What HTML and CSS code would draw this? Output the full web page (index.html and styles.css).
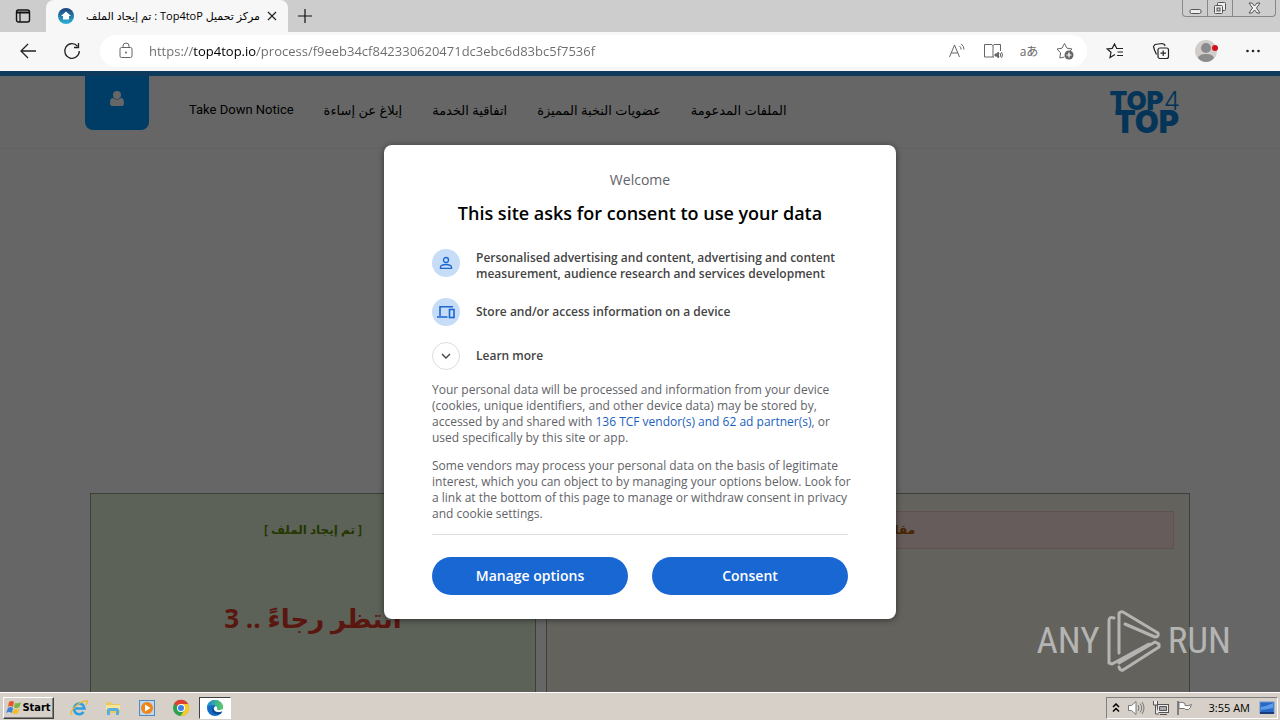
FILE: index.html
```html
<!DOCTYPE html>
<html lang="en">
<head>
    <meta charset="UTF-8">
    <meta name="viewport" content="width=device-width, initial-scale=1.0">
    <title>Top4toP</title>
    <link rel="stylesheet" href="styles.css">
</head>
<body>
    <div class="tabbar">
        <button class="tab-menu" aria-label="Tab actions">
            <svg width="16" height="16" viewBox="0 0 16 16"><rect x="1.5" y="2" width="13" height="12" rx="2" fill="none" stroke="#111" stroke-width="1.4"/><path d="M1.5 3.5h13v2h-13z" fill="#111"/><path d="M5 5v9" stroke="#111" stroke-width="1.2"/></svg>
        </button>
        <div class="tab">
            <svg width="16" height="16" viewBox="0 0 16 16">
                <defs><linearGradient id="fav" x1="0" y1="0" x2="0" y2="1"><stop offset="0" stop-color="#1d3f78"/><stop offset="1" stop-color="#2bb5d8"/></linearGradient></defs>
                <circle cx="8" cy="8" r="8" fill="url(#fav)"/><path d="M8 3.5l5 4.5h-2v3.5H5V8H3z" fill="#fff"/>
            </svg>
            <span class="tab-title" dir="rtl">مركز تحميل Top4toP : تم إيجاد الملف</span>
            <button class="tab-close" aria-label="Close tab">
                <svg width="10" height="10" viewBox="0 0 10 10"><path d="M1 1l8 8M9 1L1 9" stroke="#222" stroke-width="1.2"/></svg>
            </button>
        </div>
        <button class="new-tab" aria-label="New tab">
            <svg width="16" height="16" viewBox="0 0 16 16"><path d="M8 1v14M1 8h14" stroke="#111" stroke-width="1.2"/></svg>
        </button>
        <div class="window-buttons">
            <button aria-label="Minimize"><svg width="13" height="14" viewBox="0 0 13 14"><rect x="1" y="8.5" width="11" height="4" rx="1.5" fill="#eee" stroke="#555"/></svg></button>
            <button aria-label="Restore"><svg width="14" height="14" viewBox="0 0 14 14"><rect x="4.5" y="1.5" width="8" height="8" rx="1" fill="#eee" stroke="#555"/><rect x="1.5" y="4.5" width="8" height="8" rx="1" fill="#eee" stroke="#555"/><rect x="4" y="7" width="3" height="3" fill="#ccc" stroke="#555"/></svg></button>
            <button class="close" aria-label="Close"><svg width="13" height="12" viewBox="0 0 13 12"><path d="M1 1h3l2.5 3L9 1h3L8.5 6 12 11H9L6.5 8 4 11H1l3.5-5z" fill="#eee" stroke="#555"/></svg></button>
        </div>
    </div>

    <div class="toolbar">
        <button class="nav-btn" aria-label="Back"><svg width="18" height="16" viewBox="0 0 18 16"><path d="M9 1L2 8l7 7M2 8h15" fill="none" stroke="#222" stroke-width="1.3"/></svg></button>
        <button class="nav-btn" aria-label="Refresh"><svg width="18" height="18" viewBox="0 0 18 18"><path d="M14.5 4.2A7.3 7.3 0 1 0 16.3 9" fill="none" stroke="#222" stroke-width="1.3"/><path d="M15.5 1v4.5H11" fill="none" stroke="#222" stroke-width="1.3"/></svg></button>
        <div class="address">
            <svg class="lock" width="14" height="18" viewBox="0 0 14 18"><rect x="1" y="5.5" width="12" height="10" rx="1.5" fill="none" stroke="#666"/><path d="M4 5.5V4a3 3 0 0 1 6 0v1.5" fill="none" stroke="#666"/><circle cx="7" cy="10.5" r="1" fill="#666"/></svg>
            <input class="url" type="text" aria-label="Address" value="https://top4top.io/process/f9eeb34cf842330620471dc3ebc6d83bc5f7536f">
            <div class="address-icons">
                <button aria-label="Read aloud"><svg width="18" height="18" viewBox="0 0 18 18" fill="none" stroke="#666"><path d="M1.5 15L6.5 3l5 12M3.2 11h6.6M11.5 4a4 4 0 0 1 1.5 3.5M13.3 2a7 7 0 0 1 2.7 5.5"/></svg></button>
                <button aria-label="Immersive reader"><svg width="20" height="18" viewBox="0 0 20 18" fill="none" stroke="#666"><path d="M10 3v12M10 15H1.5V2.5H9l1 1 1-1h6.5V9M10 15h1"/><path d="M12 12h1.5l2-2v6l-2-2H12z" fill="#666"/><path d="M17 11q1.5 2 0 4M18.5 10q2 3 0 6"/></svg></button>
                <button class="translate" lang="ja" aria-label="Translate">aあ</button>
                <button aria-label="Add to favorites"><svg width="18" height="18" viewBox="0 0 18 18"><path d="M8.5 15L3.8 16l.8-5.2L1 7l5-.8L8.5 1.5 11 6.2l5 .8-2 2" fill="none" stroke="#666"/><circle cx="13" cy="13" r="4.5" fill="#666"/><path d="M13 10.5v5M10.5 13h5" stroke="#fff" stroke-width="1.2"/></svg></button>
            </div>
        </div>
        <div class="browser-actions">
            <button aria-label="Favorites"><svg width="18" height="16" viewBox="0 0 18 16" fill="none" stroke="#222" stroke-width="1.2"><path d="M9 11.5L4 14.5l1-5.2L1.2 6l5-.6L8.5 1l2.2 4.5H17M11.5 9H17M11 12.5h6"/></svg></button>
            <button aria-label="Collections"><svg width="18" height="18" viewBox="0 0 18 18" fill="none" stroke="#222" stroke-width="1.2"><rect x="6" y="6" width="10.5" height="10.5" rx="2"/><path d="M11.2 8.5v5.5M8.5 11.2H14M4.5 12.5L2.5 8 1.5 4.5l1.5-2L10 1.5l2.5 1L13 4"/></svg></button>
            <button aria-label="Profile"><svg width="24" height="22" viewBox="0 0 24 22"><circle cx="11" cy="11" r="11" fill="#d0cdca"/><circle cx="11" cy="8" r="5" fill="#8b8b8b"/><path d="M3 18q1-4 8-4t8 4q-3.5 4-8 4t-8-4" fill="#8b8b8b"/><circle cx="20" cy="8" r="3" fill="#d5101b"/></svg></button>
            <button aria-label="Settings and more"><svg width="16" height="4" viewBox="0 0 16 4" fill="#222"><circle cx="2.5" cy="2" r="1.3"/><circle cx="8" cy="2" r="1.3"/><circle cx="13.5" cy="2" r="1.3"/></svg></button>
        </div>
    </div>

    <main class="viewport">
        <header class="site-header">
            <div class="site-bar">
                <a class="user" href="#" aria-label="Account">
                    <svg width="14" height="15" viewBox="0 0 14 15" fill="#fff"><circle cx="7" cy="4" r="4"/><path d="M0 12q0-5 3-5 4 3 8 0 3 0 3 5 0 3-2 3H2q-2 0-2-3"/></svg>
                </a>
                <nav class="site-nav">
                    <a class="latin" href="#">Take Down Notice</a>
                    <a href="#" dir="rtl">إبلاغ عن إساءة</a>
                    <a href="#" dir="rtl">اتفاقية الخدمة</a>
                    <a href="#" dir="rtl">عضويات النخبة المميزة</a>
                    <a href="#" dir="rtl">الملفات المدعومة</a>
                </nav>
                <a class="logo" href="#"><span>TOP<span class="four">4</span></span><span class="second">TOP</span></a>
            </div>
        </header>

        <div class="panels" lang="ar">
            <section class="panel found">
                <p class="status" dir="rtl">[ تم إيجاد الملف ]</p>
                <p class="wait" dir="rtl">انتظر رجاءً .. 3</p>
            </section>
            <section class="panel articles">
                <h2 dir="rtl">مقالات قد تهمك</h2>
            </section>
        </div>

        <div class="overlay">
            <div class="consent" role="dialog" aria-labelledby="consent-title">
                <p class="welcome">Welcome</p>
                <h1 id="consent-title">This site asks for consent to use your data</h1>
                <ul class="purposes">
                    <li>
                        <span class="circle"><svg width="14" height="14" viewBox="0 0 14 14" fill="none" stroke="#1967d2" stroke-width="1.3"><circle cx="7" cy="4" r="2.5"/><path d="M1.5 12.3v-1.5q1-2.3 5.5-2.3t5.5 2.3v1.5z"/></svg></span>
                        <span class="purpose">Personalised advertising and content, advertising and content measurement, audience research and services development</span>
                    </li>
                    <li>
                        <span class="circle"><svg width="18" height="14" viewBox="0 0 18 14" fill="none" stroke="#1967d2" stroke-width="1.6"><path d="M16 1.8H3V11M0 12h10.5"/><rect x="12.5" y="4.5" width="4.5" height="8"/></svg></span>
                        <span class="purpose">Store and/or access information on a device</span>
                    </li>
                    <li>
                        <button class="circle expand" id="learn" aria-labelledby="learn-label"><svg width="10" height="8" viewBox="0 0 10 8"><path d="M1 2l4 4 4-4" fill="none" stroke="#444" stroke-width="1.4"/></svg></button>
                        <label class="purpose" id="learn-label" for="learn">Learn more</label>
                    </li>
                </ul>
                <p class="details">Your personal data will be processed and information from your device (cookies, unique identifiers, and other device data) may be stored by, accessed by and shared with <a href="#">136 TCF vendor(s) and 62 ad partner(s)</a>, or used specifically by this site or app.</p>
                <p class="details">Some vendors may process your personal data on the basis of legitimate interest, which you can object to by managing your options below. Look for a link at the bottom of this page to manage or withdraw consent in privacy and cookie settings.</p>
                <div class="choices">
                    <button>Manage options</button>
                    <button>Consent</button>
                </div>
            </div>
        </div>

        <div class="watermark">
            <span>ANY</span>
            <svg width="54" height="62" viewBox="0 0 54 62" fill="none" stroke="#b4b4b2" stroke-width="3" stroke-linejoin="round" stroke-linecap="round"><path d="M12 43V3q2-2 4-1l35 21q1 4-3 4L18 14M7 8Q2 6 2 11v42l3 1 37-20M12 57q1 4 4 3l36-23v-3l-4-2L12 53"/></svg>
            <span>RUN</span>
        </div>
    </main>

    <footer class="taskbar">
        <button class="start">
            <svg width="16" height="16" viewBox="0 0 16 16"><path d="M3 2q3-2 5 0L7 7Q4 5 2 7z" fill="#e8572a"/><path d="M9 3q3 1 6-1l-1.5 5Q11 9 8 7.5z" fill="#76b843"/><path d="M2 8q3-2 5 0l-1 5q-3-2-6 0z" fill="#3b83d6"/><path d="M8 9q3 1 5.5-.5L12 13q-3 2-5.5 0z" fill="#f6bd25"/></svg>
            Start
        </button>
        <div class="quick">
            <button aria-label="Internet Explorer"><svg width="18" height="18" viewBox="0 0 18 18" fill="none"><path d="M4.5 9.5h10A5.3 5.3 0 1 0 13.5 13" stroke="#2f9fe0" stroke-width="2.6"/><path d="M2 16Q-1 13 6 7t11-5q1 1-1 4" stroke="#edb92e" stroke-width="1.3"/></svg></button>
            <button aria-label="Explorer"><svg width="18" height="18" viewBox="0 0 18 18"><path d="M2 3h5l1 2h8v9H2z" fill="#ecc95d"/><path d="M2 6h14v5H2z" fill="#f9e59a"/><path d="M3 16v-5q0-2 2-2h8q2 0 2 2v5h-3v-4H6v4z" fill="#59b0de"/></svg></button>
            <button aria-label="Media Player"><svg width="18" height="18" viewBox="0 0 18 18"><rect x="1.5" y="1.5" width="15" height="15" fill="#b8d9f2" stroke="#5788ba"/><circle cx="9" cy="9" r="6" fill="#f18518"/><path d="M7 5.5l5.5 3.5L7 12.5z" fill="#fff"/></svg></button>
            <button aria-label="Chrome"><svg width="18" height="18" viewBox="0 0 18 18"><circle cx="9" cy="9" r="8" fill="#2ca24f"/><path d="M9 9L2 5a8 8 0 0 1 14 0z" fill="#dd4032"/><path d="M9 5h7.2A8 8 0 0 1 8.5 17l4-6z" fill="#f9c927"/><circle cx="9" cy="9" r="4" fill="#fff"/><circle cx="9" cy="9" r="3" fill="#3f7fe8"/></svg></button>
            <button class="active" aria-label="Edge"><svg width="18" height="18" viewBox="0 0 18 18"><defs><linearGradient id="edge"><stop offset="0" stop-color="#1686d9"/><stop offset="1" stop-color="#5bd05b"/></linearGradient></defs><circle cx="9" cy="9" r="8" fill="#126bc2"/><path d="M1 9a8 8 0 0 1 16 0q0 4-5 4-3 0-1.5-2.5Q11 6 7 6 3 6 1 9" fill="url(#edge)"/><path d="M8 8q-2 7 8 5l-1.5 2Q6 16 6 11q0-2 2-3" fill="#0c4697"/><path d="M10 7q-4 2-1 5 3 2 8 0v-2q-4 2-6 .5 1-2-1-3.5" fill="#fff"/></svg></button>
        </div>
        <div class="tray">
            <button aria-label="Show hidden icons"><svg width="8" height="10" viewBox="0 0 8 10"><path d="M1 4l3-3 3 3M1 8.5l3-3 3 3" fill="none" stroke="#000" stroke-width="1.5"/></svg></button>
            <button aria-label="Volume"><svg width="18" height="16" viewBox="0 0 18 16" fill="none" stroke="#777"><path d="M1.5 5.5h3L9 1.5v13l-4.5-4h-3z" fill="#fff"/><path d="M11 5q2 3 0 6M13 3.5q3.5 4.5 0 9M15 2q4 6 0 12"/></svg></button>
            <button aria-label="Network"><svg width="17" height="16" viewBox="0 0 17 16" fill="#eee" stroke="#555"><rect x="5.5" y="4.5" width="11" height="8"/><path d="M7.5 6.5h7v4h-7z" fill="#aaa"/><path d="M8 14.5h7M1.5 1v4h4V1M3.5 5v9H7"/></svg></button>
            <button aria-label="Action Center"><svg width="17" height="16" viewBox="0 0 17 16"><path d="M2 1v14" stroke="#666" stroke-width="1.5"/><path d="M3 2.5q3-1 6 1v2q3 1 6.5-1-1 4-3 5Q9 10 8.5 8.5H3z" fill="#fff" stroke="#777"/></svg></button>
            <time>3:55 AM</time>
            <button aria-label="Show desktop"><svg width="16" height="14" viewBox="0 0 16 14"><rect x="1" y="1" width="14" height="11" fill="#2867c4" stroke="#6794ce"/><path d="M2 6q6-1 12-4v5q-6 1-12 2z" fill="#5b9be8"/><path d="M1 12h14" stroke="#173c7c" stroke-width="2"/></svg></button>
        </div>
    </footer>
</body>
</html>
```
FILE: styles.css
```css
*{
    box-sizing: border-box;
}
body{
    margin: 0px;
    height: 100vh;
    display: flex;
    flex-direction: column;
    overflow: hidden;
    font-family: "Open Sans", "DejaVu Sans", sans-serif;
    color: #000;
}
button{
    padding: 0px;
    border: 0px;
    background: none;
    font-family: inherit;
    color: inherit;
    display: flex;
    align-items: center;
    justify-content: center;
}
svg{
    display: block;
    flex-shrink: 0;
}
p, h1, h2, ul{
    margin: 0px;
    padding: 0px;
}
a{
    color: inherit;
    text-decoration: none;
}

/* browser */
.tabbar{
    height: 32px;
    display: flex;
    align-items: flex-end;
    background-color: #cdcdcd;
}
.tab-menu{
    width: 46px;
    height: 32px;
}
.tab{
    width: 242px;
    height: 32px;
    padding: 0px 10px 0px 12px;
    display: flex;
    align-items: center;
    background-color: #f7f7f7;
    border-radius: 8px 8px 0px 0px;
}
.tab-title{
    flex: 1;
    padding-right: 6px;
    font-size: 11px;
    line-height: 16px;
    white-space: nowrap;
}
.tab-close{
    width: 12px;
    height: 16px;
}
.new-tab{
    width: 34px;
    height: 32px;
}
.window-buttons{
    align-self: flex-start;
    margin-left: auto;
    margin-right: 4px;
    display: flex;
    height: 17px;
    border: 1px solid #888;
    border-top: 0px;
    border-radius: 0px 0px 4px 4px;
}
.window-buttons button{
    width: 25px;
    border-right: 1px solid #888;
}
.window-buttons .close{
    width: 42px;
    border-right: 0px;
}
.toolbar{
    height: 39px;
    display: flex;
    align-items: center;
    padding: 0px 15px 1px 6px;
    background-color: #f7f7f7;
}
.nav-btn{
    width: 44px;
    height: 32px;
}
.address{
    flex: 1;
    height: 32px;
    margin-left: 6px;
    padding: 0px 12px 0px 19px;
    display: flex;
    align-items: center;
    background-color: #fff;
    border-radius: 16px;
}
.url{
    flex: 1;
    min-width: 0px;
    height: 24px;
    margin-left: 16px;
    padding: 0px;
    border: 0px;
    outline: 0px;
    font-family: "Open Sans", sans-serif;
    font-size: 13px;
    /* host is darker than the rest of the address */
    background: linear-gradient(to right, #6b6b6b 44px, #000 44px, #000 107px, #6b6b6b 107px);
    background-clip: text;
    -webkit-background-clip: text;
    color: transparent;
}
.address-icons{
    display: flex;
    gap: 16px;
}
.address-icons button{
    width: 20px;
    height: 24px;
}
.address-icons .translate{
    font-family: "Open Sans", "Noto Sans CJK JP", sans-serif;
    font-size: 12px;
    color: #666;
}
.browser-actions{
    display: flex;
    gap: 22px;
    margin-left: 16px;
}
.browser-actions button{
    width: 24px;
    height: 24px;
}

/* site */
.viewport{
    position: relative;
    flex: 1;
    min-height: 0px;
    overflow: hidden;
    background-color: #fff;
}
.site-header{
    height: 78px;
    border-top: 5px solid #2592e4;
    border-bottom: 1px solid #f4f4f4;
}
.site-bar{
    max-width: 1110px;
    height: 100%;
    margin: 0px auto;
    display: flex;
    align-items: flex-start;
}
.user{
    width: 64px;
    height: 54px;
    padding-top: 15px;
    display: flex;
    justify-content: center;
    background-color: #0098ff;
    border-radius: 0px 0px 8px 8px;
}
.site-nav{
    display: flex;
    gap: 30px;
    margin-left: 40px;
    padding-top: 24px;
    font-size: 13px;
    line-height: 20px;
    white-space: nowrap;
}
.site-nav .latin{
    font-family: Roboto, sans-serif;
}
.logo{
    margin: 14px 15px 0px auto;
    display: flex;
    flex-direction: column;
    font-family: Inter, sans-serif;
    font-weight: 900;
    font-size: 26px;
    line-height: 21px;
    color: #0a84dc;
}
.logo .second{
    padding-left: 5px;
    font-size: 31px;
}
.logo .four{
    font-weight: 300;
}
.panels{
    max-width: 1100px;
    height: 400px;
    margin: 344px auto 0px;
    display: grid;
    grid-template-columns: 9fr 13fr;
    gap: 10px;
}
.panel{
    border: 1px solid #8fa58f;
    text-align: center;
}
.found{
    background-color: #e7f5dc;
    padding-top: 24px;
}
.articles{
    background-color: #f9f6e8;
    padding: 17px 15px;
}
.status{
    font-size: 12px;
    line-height: 24px;
    font-weight: bold;
    color: #5a8a00;
}
.wait{
    margin-top: 52px;
    font-size: 26px;
    line-height: 48px;
    font-weight: bold;
    color: #e03a2a;
}
.articles h2{
    border: 1px solid #f0c8c4;
    background-color: #ffe6e4;
    font-size: 12px;
    line-height: 36px;
    color: #b35c00;
}

/* consent dialog */
.overlay{
    position: absolute;
    inset: 0px;
    display: flex;
    align-items: center;
    justify-content: center;
    background-color: rgba(0, 0, 0, 0.6);
}
.consent{
    width: 512px;
    max-width: 100%;
    padding: 25px 48px 24px;
    background-color: #fff;
    border-radius: 8px;
    box-shadow: 0px 1px 6px rgba(0, 0, 0, 0.5);
}
.welcome{
    font-size: 14px;
    line-height: 20px;
    font-weight: 500;
    text-align: center;
    color: #5f6368;
}
.consent h1{
    margin-top: 11px;
    font-size: 18px;
    line-height: 24px;
    font-weight: 600;
    text-align: center;
}
.purposes{
    margin-top: 24px;
    display: flex;
    flex-direction: column;
    gap: 16px;
    list-style: none;
}
.purposes li{
    display: flex;
    align-items: flex-start;
    gap: 16px;
}
.circle{
    width: 28px;
    height: 28px;
    flex-shrink: 0;
    display: flex;
    align-items: center;
    justify-content: center;
    border-radius: 50%;
    background-color: #c6dcf7;
}
.expand{
    background-color: #fff;
    border: 1px solid #dadce0;
}
.purpose{
    align-self: center;
    padding-top: 1px;
    font-size: 12px;
    line-height: 16px;
    font-weight: 600;
    color: #444;
}
.details{
    margin-top: 12px;
    margin-right: -4px;
    font-size: 12px;
    line-height: 16px;
    color: #5f6368;
}
.details a{
    color: #1a5fc0;
}
.choices{
    margin-top: 12px;
    padding-top: 22px;
    display: flex;
    gap: 24px;
    border-top: 1px solid #dadce0;
}
.choices button{
    flex: 1;
    height: 38px;
    border-radius: 19px;
    background-color: #1967d2;
    color: #fff;
    font-size: 14px;
    font-weight: 600;
}
.watermark{
    position: absolute;
    right: 49px;
    bottom: 20px;
    display: flex;
    align-items: center;
    gap: 7px;
    font-family: "Roboto Condensed", Roboto, sans-serif;
    font-size: 37px;
    line-height: 62px;
    color: #b4b4b2;
}

/* taskbar */
.taskbar{
    height: 28px;
    display: flex;
    align-items: center;
    padding: 2px 2px 0px 3px;
    border-top: 1px solid #fff;
    background-color: #d6d0c8;
}
.start{
    width: 51px;
    height: 22px;
    border: 1px solid;
    border-color: #fff #404040 #404040 #fff;
    box-shadow: inset -1px -1px 0px #808080;
    font-family: "DejaVu Sans Condensed", "DejaVu Sans", sans-serif;
    font-size: 11px;
    font-weight: bold;
}
.quick{
    display: flex;
    gap: 2px;
    margin-left: 9px;
}
.quick button{
    width: 32px;
    height: 22px;
}
.quick .active{
    background-color: #fff;
    border: 1px solid;
    border-color: #404040 #fff #fff #404040;
}
.tray{
    height: 22px;
    margin-left: auto;
    padding: 0px 2px 0px 5px;
    display: flex;
    align-items: center;
    gap: 7px;
    border: 1px solid;
    border-color: #808080 #fff #fff #808080;
}
.tray time{
    padding: 0px 2px 0px 9px;
    font-family: "Open Sans", sans-serif;
    font-size: 11px;
}
```
